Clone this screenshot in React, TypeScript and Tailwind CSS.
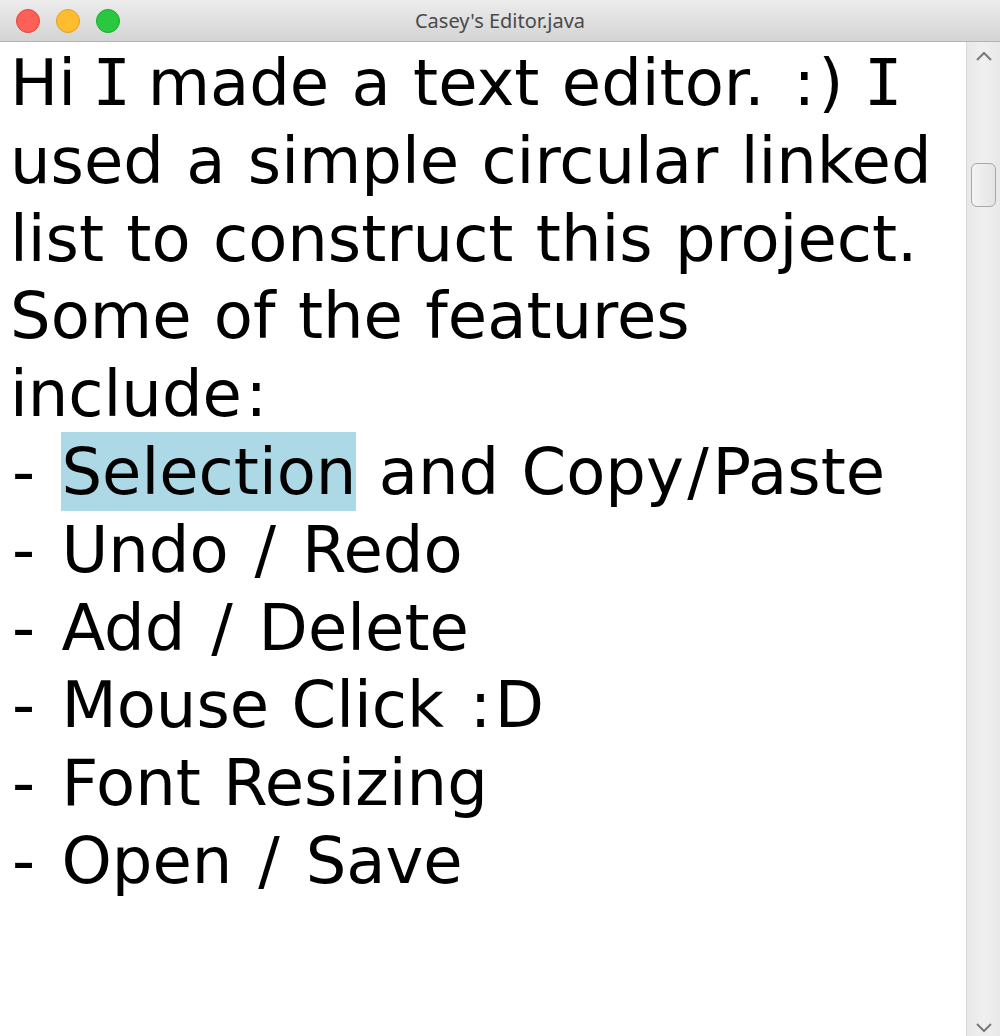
const lines: { text: string; sel?: [string, string, string] }[] = [
  { text: "Hi I made a text editor. :) I" },
  { text: "used a simple circular linked" },
  { text: "list to construct this project." },
  { text: "Some of the features" },
  { text: "include:" },
  { text: "", sel: ["- ", "Selection", " and Copy/Paste"] },
  { text: "- Undo / Redo" },
  { text: "- Add / Delete" },
  { text: "- Mouse Click :D" },
  { text: "- Font Resizing" },
  { text: "- Open / Save" },
];

// the editor font is Verdana; nudge the glyphs where DejaVu Sans runs narrower
function Glyphs({ text }: { text: string }) {
  return (
    <>
      {text.split("").map((ch, i) => {
        if (ch === "I")
          return (
            <span key={i} className="-mx-[5.75px] font-['DejaVu_Sans_Mono',monospace]">
              I
            </span>
          );
        if (ch === "-")
          return (
            <span key={i} className="ml-[2px] mr-[4px]">
              -
            </span>
          );
        if (ch === "/" || ch === ":")
          return (
            <span key={i} className="mx-[3.5px]">
              {ch}
            </span>
          );
        if (ch === ".")
          return (
            <span key={i} className="mr-[3px]">
              .
            </span>
          );
        if (ch === ")")
          return (
            <span key={i} className="mr-[4px]">
              )
            </span>
          );
        return ch;
      })}
    </>
  );
}

function TitleBar() {
  return (
    <div className="relative flex h-[42px] items-center justify-center border-b border-[#b4b4b4] bg-gradient-to-b from-[#ececec] to-[#d4d4d4]">
      <div className="absolute left-[16px] top-[9px] flex gap-[16px]">
        <span className="h-[24px] w-[24px] rounded-full border border-[#e0443e] bg-[#fe5f57]" />
        <span className="h-[24px] w-[24px] rounded-full border border-[#dea123] bg-[#febc2e]" />
        <span className="h-[24px] w-[24px] rounded-full border border-[#1aab29] bg-[#28c840]" />
      </div>
      <span className="font-['Noto_Sans',sans-serif] text-[20px] text-[#4a4a4a]">Casey's Editor.java</span>
    </div>
  );
}

function ScrollBar() {
  return (
    <div className="flex w-[34px] flex-col items-center border-l border-[#d8d8d8] bg-gradient-to-r from-[#e8e8e8] via-[#f0f0f0] to-[#e8e8e8]">
      <svg width="18" height="12" viewBox="0 0 18 12" className="mt-[8px]">
        <path d="M2 10 L9 3 L16 10" fill="none" stroke="#7a7a7a" strokeWidth="2" />
      </svg>
      <div className="mt-[101px] h-[44px] w-[25px] rounded-[6px] border border-[#a8a8a8] bg-gradient-to-r from-[#f4f4f4] to-[#e4e4e4]" />
      <div className="flex-1" />
      <svg width="18" height="12" viewBox="0 0 18 12" className="mb-[2px]">
        <path d="M2 2 L9 9 L16 2" fill="none" stroke="#7a7a7a" strokeWidth="2" />
      </svg>
    </div>
  );
}

export default function App() {
  return (
    <div className="flex h-[1036px] w-[1000px] flex-col overflow-hidden bg-white">
      <TitleBar />
      <div className="flex flex-1">
        <div className="flex-1 pl-[10px] pt-[3px] font-['DejaVu_Sans',sans-serif] text-[64px] leading-[77.8px] text-black [word-spacing:2px]">
          {lines.map((l, i) =>
            l.sel ? (
              <div key={i} className="whitespace-pre">
                <Glyphs text={l.sel[0]} />
                <span className="bg-[#add8e6] pb-[2px] pt-[3px]">{l.sel[1]}</span>
                <Glyphs text={l.sel[2]} />
              </div>
            ) : (
              <div key={i} className="whitespace-pre">
                <Glyphs text={l.text} />
              </div>
            )
          )}
        </div>
        <ScrollBar />
      </div>
    </div>
  );
}
